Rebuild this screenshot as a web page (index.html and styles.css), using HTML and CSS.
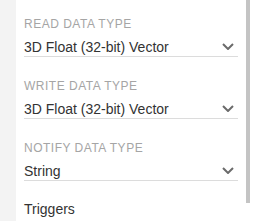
FILE: index.html
```html
<!DOCTYPE html>
<html lang="en">
<head>
    <meta charset="UTF-8">
    <meta name="viewport" content="width=device-width, initial-scale=1.0">
    <title>Characteristic Settings</title>
    <link rel="stylesheet" href="styles.css">
</head>
<body>
    <div class="layout">
        <div class="panel">
            <div class="field">
                <div class="field-label">Read Data Type</div>
                <div class="select">
                    <span class="select-value">3D Float (32-bit) Vector</span>
                    <svg class="chevron" width="12" height="7" viewBox="0 0 12 7"><path d="M1 1l5 5 5-5" fill="none" stroke="#6b6b6b" stroke-width="2"/></svg>
                </div>
            </div>
            <div class="field">
                <div class="field-label">Write Data Type</div>
                <div class="select">
                    <span class="select-value">3D Float (32-bit) Vector</span>
                    <svg class="chevron" width="12" height="7" viewBox="0 0 12 7"><path d="M1 1l5 5 5-5" fill="none" stroke="#6b6b6b" stroke-width="2"/></svg>
                </div>
            </div>
            <div class="field">
                <div class="field-label">Notify Data Type</div>
                <div class="select">
                    <span class="select-value">String</span>
                    <svg class="chevron" width="12" height="7" viewBox="0 0 12 7"><path d="M1 1l5 5 5-5" fill="none" stroke="#6b6b6b" stroke-width="2"/></svg>
                </div>
            </div>
            <div class="section-title">Triggers</div>
        </div>
        <div class="scrollbar">
            <div class="scroll-thumb"></div>
        </div>
    </div>
</body>
</html>
```

FILE: styles.css
```css
body {
    font-family: "Liberation Sans", Arial, sans-serif;
    margin: 0;
    background-color: #f3f3f3;
    height: 221px;
    overflow: hidden;
}

.layout {
    display: flex;
    height: 221px;
    padding-left: 16px;
}

.panel {
    width: 214px;
    padding: 0 8px;
    background-color: white;
}

.field {
    height: 62px;
    padding-top: 17px;
    box-sizing: border-box;
}

.field-label {
    font-size: 12px;
    line-height: 14px;
    text-transform: uppercase;
    letter-spacing: 0.5px;
    color: #a5a5a5;
}

.select {
    display: flex;
    align-items: flex-end;
    justify-content: space-between;
    margin-top: 5px;
    height: 20px;
    border-bottom: 1px solid #dcdcdc;
}

.select-value {
    font-size: 14px;
    line-height: 18px;
    color: #333;
}

.chevron {
    align-self: center;
    margin-right: 4px;
}

.section-title {
    margin-top: 14px;
    font-size: 14px;
    line-height: 18px;
    color: #333;
}

.scrollbar {
    width: 7px;
    background-color: white;
}

.scroll-thumb {
    width: 4px;
    height: 203px;
    background-color: #c4c4c4;
}
```
